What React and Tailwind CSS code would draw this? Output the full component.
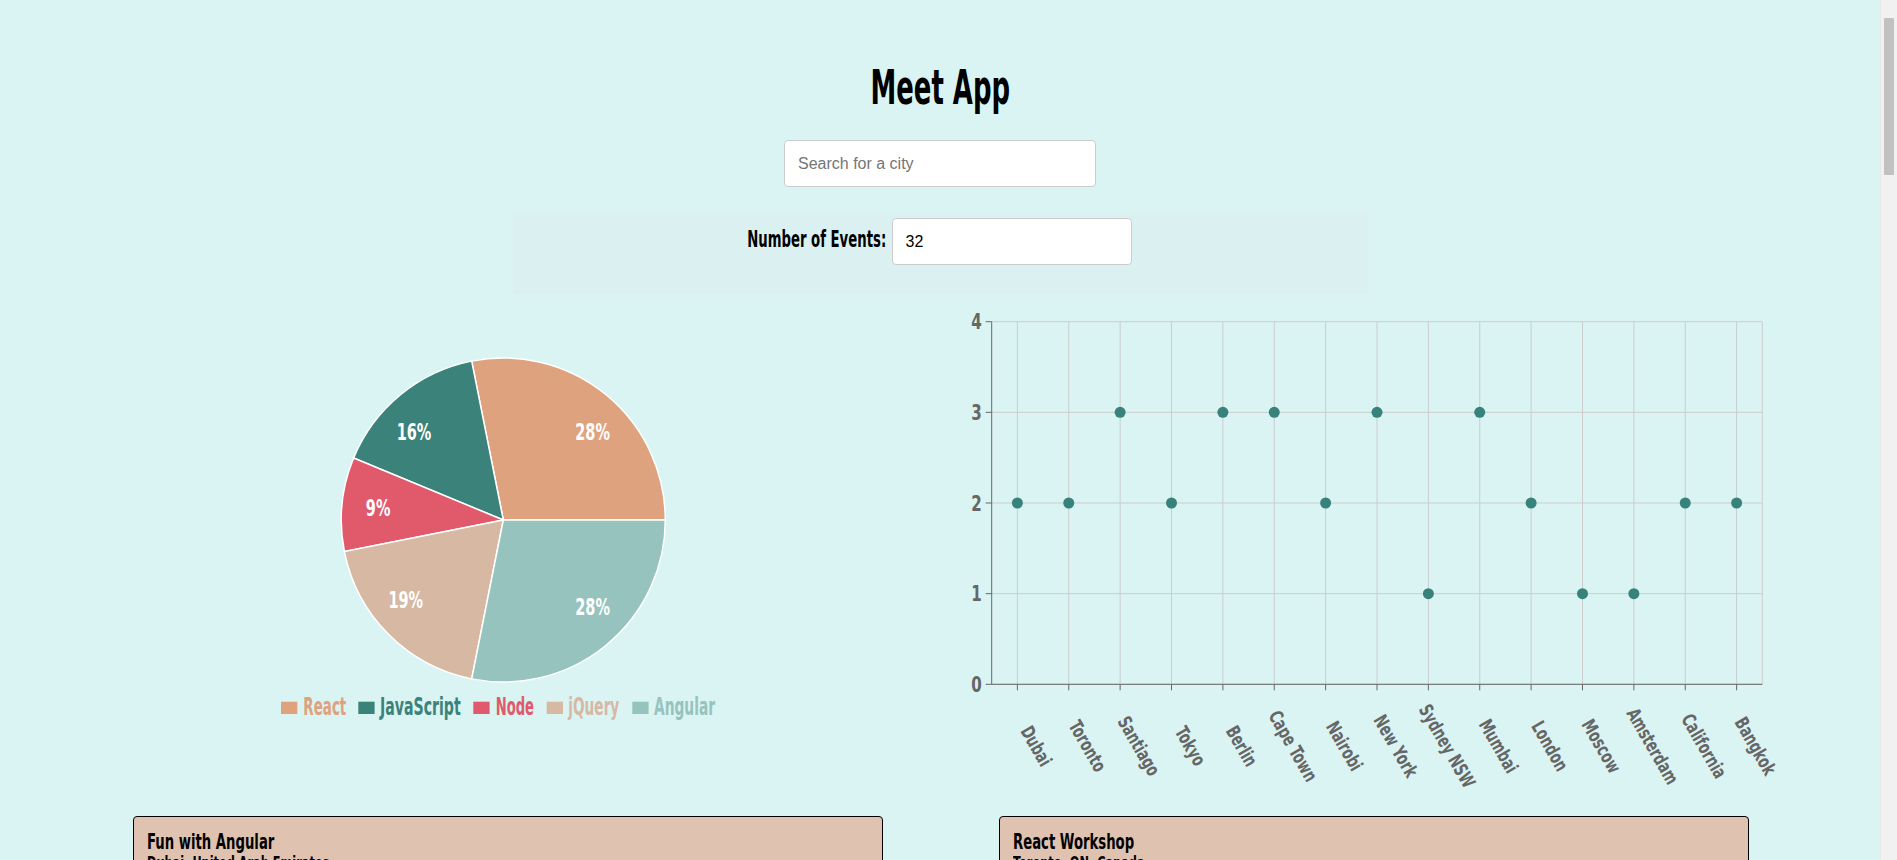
import { useState } from "react";

const FONT = "font-['Liberation_Sans_Narrow','DejaVu_Sans_Condensed','Liberation_Sans',sans-serif]";

const genres = [
  { name: "React", value: 9, color: "#dfa27f", box: 281, text: 303.3, w: 43 },
  { name: "JavaScript", value: 5, color: "#3a827a", box: 358.3, text: 380, w: 80.7 },
  { name: "Node", value: 3, color: "#e05a6b", box: 473.3, text: 495.7, w: 38.3 },
  { name: "jQuery", value: 6, color: "#d7b8a3", box: 546.7, text: 568.3, w: 51 },
  { name: "Angular", value: 9, color: "#96c3bd", box: 632.3, text: 654, w: 61 },
];

const cities = [
  ["Dubai", 2], ["Toronto", 2], ["Santiago", 3], ["Tokyo", 2], ["Berlin", 3],
  ["Cape Town", 3], ["Nairobi", 2], ["New York", 3], ["Sydney NSW", 1], ["Mumbai", 3],
  ["London", 2], ["Moscow", 1], ["Amsterdam", 1], ["California", 2], ["Bangkok", 2],
];

const places = [
  "Dubai, United Arab Emirates", "Toronto, ON, Canada", "Santiago, Chile", "Tokyo, Japan",
  "Berlin, Germany", "Cape Town, South Africa", "Nairobi, Kenya", "New York, NY, USA",
  "Sydney NSW, Australia", "Mumbai, Maharashtra, India", "London, UK", "Moscow, Russia",
  "Amsterdam, Netherlands", "California, USA", "Bangkok, Thailand",
];
const titles = ["Fun with Angular", "React Workshop", "Learn JavaScript", "jQuery is Dead?", "Node.js Meetup"];

const events = Array.from({ length: 32 }, (_, i) => ({
  id: i,
  title: titles[i % titles.length],
  place: places[i % places.length],
  when: `2020-05-${String(19 + (i % 10)).padStart(2, "0")} 16:00`,
}));

const GenrePie = () => {
  const cx = 503.3, cy = 220, r = 162;
  const total = genres.reduce((s, g) => s + g.value, 0);
  const pt = (deg, rad) => {
    const a = (deg * Math.PI) / 180;
    return [cx + rad * Math.cos(a), cy - rad * Math.sin(a)];
  };
  let start = 0;
  const slices = genres.map((g) => {
    const sweep = (g.value / total) * 360;
    const end = start + sweep;
    const [x1, y1] = pt(start, r);
    const [x2, y2] = pt(end, r);
    const [lx, ly] = pt(start + sweep / 2, r * 0.7);
    const slice = {
      ...g,
      d: `M${cx} ${cy} L${x1} ${y1} A${r} ${r} 0 ${sweep > 180 ? 1 : 0} 0 ${x2} ${y2} Z`,
      lx, ly,
      anchor: lx > cx ? "start" : "end",
      pct: Math.round((g.value / total) * 100),
    };
    start = end;
    return slice;
  });

  return (
    <svg width="940" height="430" className={`${FONT} font-bold`}>
      {slices.map((s) => (
        <path key={s.name} d={s.d} fill={s.color} stroke="#fff" strokeWidth="1.5" />
      ))}
      {slices.map((s) => (
        <text
          key={s.name}
          transform={`translate(${s.lx} ${s.ly}) scale(0.7 1)`}
          fill="#fff"
          fontSize="23"
          textAnchor={s.anchor}
          dominantBaseline="central"
        >
          {s.pct}%
        </text>
      ))}
      {/* legend */}
      {genres.map((g) => (
        <g key={g.name}>
          <rect x={g.box} y={401.7} width="16.3" height="12.3" fill={g.color} />
          <text x={g.text} y={415} fill={g.color} fontSize="24.5" textLength={g.w} lengthAdjust="spacingAndGlyphs">
            {g.name}
          </text>
        </g>
      ))}
    </svg>
  );
};

const CityScatter = () => {
  const left = 51.7, right = 822.3, top = 21.7, bottom = 384.3;
  const band = (right - left) / cities.length;
  const yFor = (v) => bottom - ((bottom - top) / 4) * v;
  const xs = cities.map((_, i) => left + band * (i + 0.5));

  return (
    <svg width="940" height="500" className={`${FONT} font-bold`}>
      {[0, 1, 2, 3, 4].map((v) => (
        <line key={v} x1={left} x2={right} y1={yFor(v)} y2={yFor(v)} stroke="#ccc" />
      ))}
      {xs.map((x, i) => (
        <line key={i} x1={x} x2={x} y1={top} y2={bottom} stroke="#ccc" />
      ))}
      <line x1={right} x2={right} y1={top} y2={bottom} stroke="#ccc" />

      <line x1={left} x2={left} y1={top} y2={bottom} stroke="#666" />
      <line x1={left} x2={right} y1={bottom} y2={bottom} stroke="#666" />
      {[0, 1, 2, 3, 4].map((v) => (
        <g key={v}>
          <line x1={left - 6} x2={left} y1={yFor(v)} y2={yFor(v)} stroke="#666" />
          <text
            transform={`translate(${left - 10} ${yFor(v)}) scale(0.8 1)`}
            fill="#666"
            fontSize="21"
            textAnchor="end"
            dominantBaseline="central"
          >
            {v}
          </text>
        </g>
      ))}
      {xs.map((x, i) => (
        <g key={i}>
          <line x1={x} x2={x} y1={bottom} y2={bottom + 6} stroke="#666" />
          <text
            transform={`translate(${x + 19} 446) rotate(60) scale(0.76 1)`}
            fill="#666"
            fontSize="19"
            textAnchor="middle"
            dominantBaseline="central"
          >
            {cities[i][0]}
          </text>
        </g>
      ))}
      {cities.map(([name, v], i) => (
        <circle key={name} cx={xs[i]} cy={yFor(v)} r="5.5" fill="#37827a" />
      ))}
    </svg>
  );
};

const EventCard = ({ event }) => (
  <div className="w-[750px] bg-[#e0c2b0] border border-black rounded-[4px] px-[13px] pt-[14px] pb-[16px]">
    <h2 className={`origin-left scale-x-[0.7] ${FONT} font-bold text-[21px] leading-[22px] text-black whitespace-nowrap`}>
      {event.title}
    </h2>
    <p className={`origin-left scale-x-[0.7] ${FONT} font-bold text-[18px] leading-[20px] text-black whitespace-nowrap`}>
      {event.place}
    </p>
    <p className={`origin-left scale-x-[0.7] ${FONT} font-bold text-[18px] leading-[20px] text-black whitespace-nowrap`}>
      {event.when}
    </p>
    <button className={`mt-3 px-3 py-1 rounded-[4px] bg-[#3a827a] text-white ${FONT} font-bold text-[15px]`}>
      Show Details
    </button>
  </div>
);

export default function App() {
  const [query, setQuery] = useState("");
  const [count, setCount] = useState("32");

  return (
    <div className="min-h-screen bg-[#daf4f3] pr-[17px]">
      {/* page scrollbar */}
      <div className="fixed top-0 right-0 h-screen w-[17px] bg-[#f1f1f1] border-l border-[#e8e8e8] px-[3px] pt-[18px]">
        <div className="h-[157px] rounded-[1px] bg-[#c1c1c1]" />
      </div>

      <div className="pb-10">
        <h1 className={`pt-[63px] text-center ${FONT} font-bold text-[48px] leading-[48px] text-black`}>
          <span className="inline-block scale-x-[0.6]">Meet App</span>
        </h1>

        <div className="mt-[29px] flex justify-center">
          <input
            value={query}
            onChange={(e) => setQuery(e.target.value)}
            placeholder="Search for a city"
            className="w-[312px] h-[47px] px-[13px] bg-white border border-[#ccc] rounded-[4px] font-['Liberation_Sans',Arial,sans-serif] text-[16px] text-black placeholder:text-[#757575] outline-none"
          />
        </div>

        <div className="mt-[26px] mx-auto w-[855px] h-[81px] bg-[#dbf0f1] rounded-[3px] flex justify-center items-start pt-[5px] gap-[5px]">
          <label className="w-[138px] mt-[9px] flex justify-end">
            <span
              className={`inline-block whitespace-nowrap origin-right scale-x-[0.64] ${FONT} font-bold text-[23px] leading-[24px] text-black`}
            >
              Number of Events:
            </span>
          </label>
          <input
            value={count}
            onChange={(e) => setCount(e.target.value)}
            className="w-[240px] h-[47px] px-[13px] bg-white border border-[#ccc] rounded-[4px] font-['Liberation_Sans',Arial,sans-serif] text-[16px] text-black outline-none"
          />
        </div>

        <div className="mt-[6px] grid grid-cols-[940px_940px] h-[500px]">
          <GenrePie />
          <CityScatter />
        </div>

        <div className="mt-[16px] grid grid-cols-[750px_750px] gap-x-[116px] gap-y-[20px] pl-[133px]">
          {events.map((ev) => (
            <EventCard key={ev.id} event={ev} />
          ))}
        </div>
      </div>
    </div>
  );
}
